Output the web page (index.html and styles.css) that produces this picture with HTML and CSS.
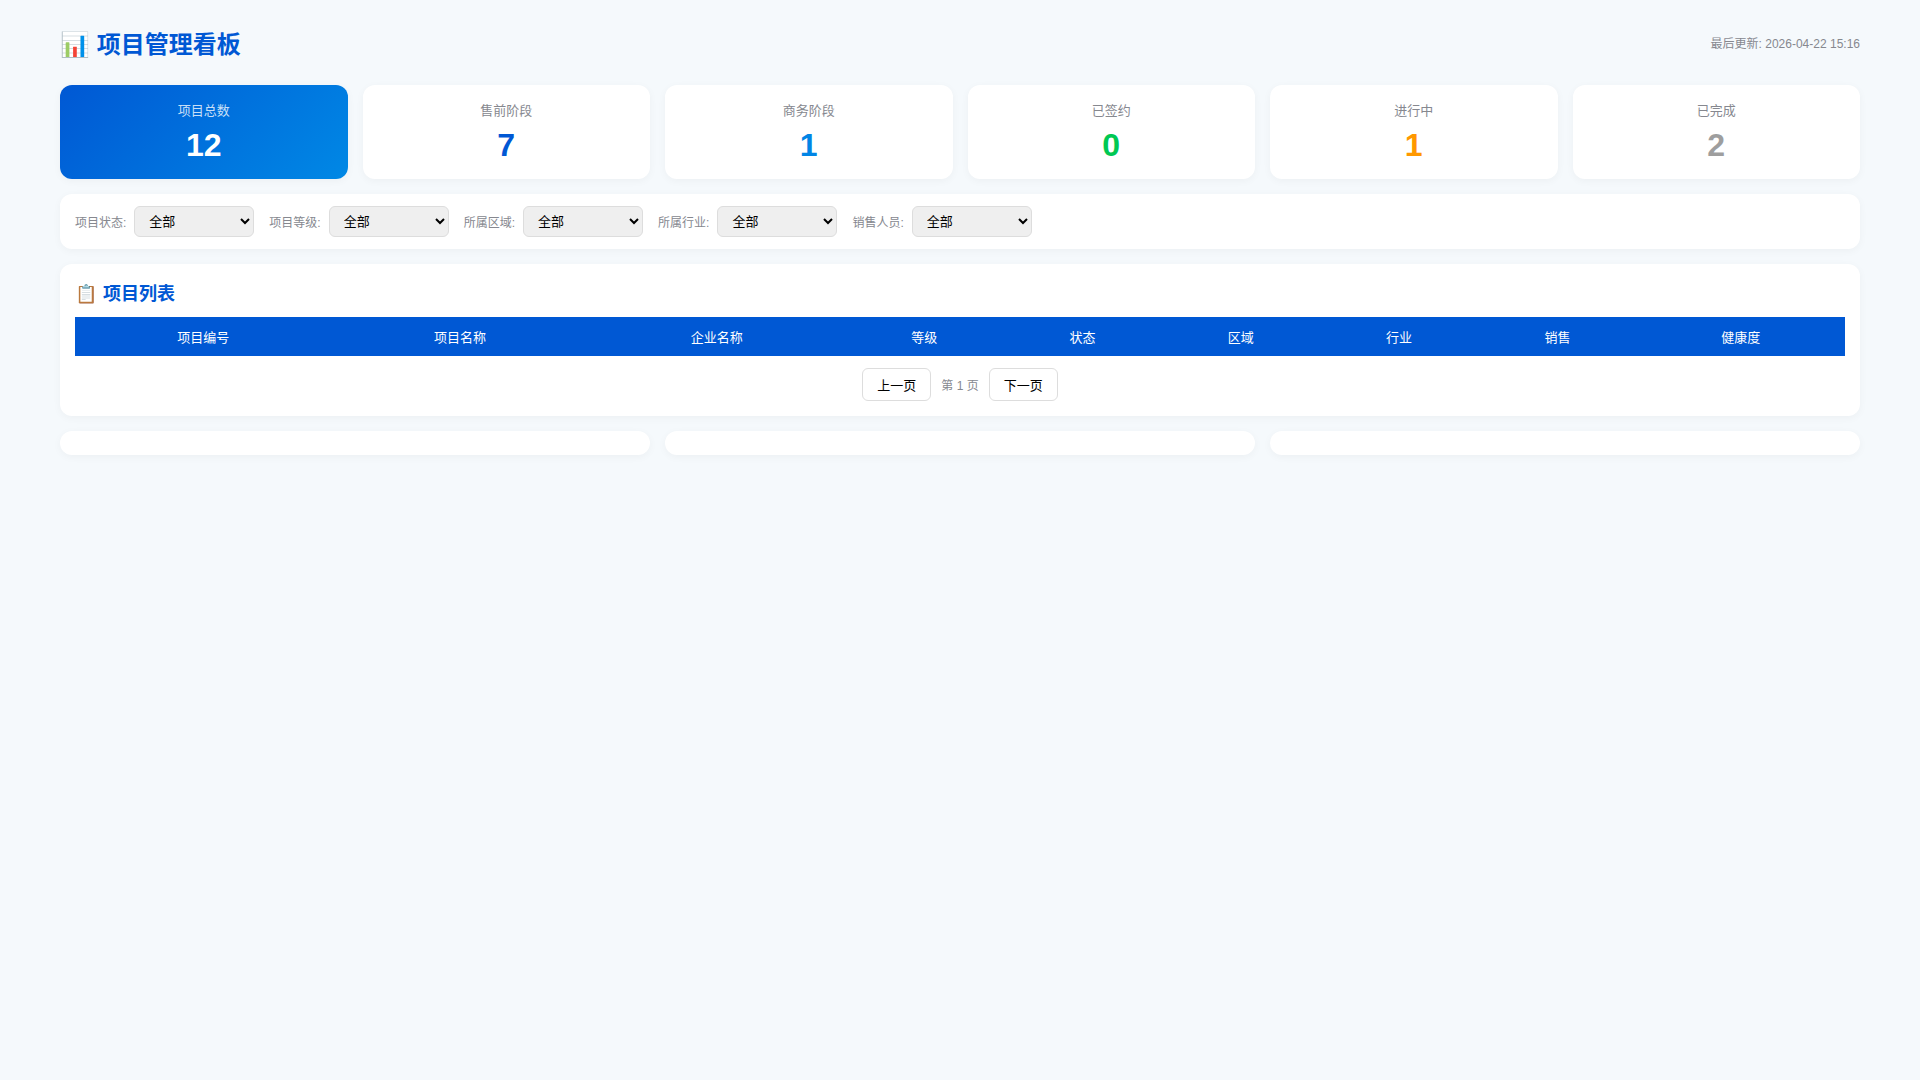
FILE: index.html
```html
<!DOCTYPE html>
<html lang="zh-CN">
<head>
<meta charset="utf-8">
<title>项目管理看板</title>
<link rel="stylesheet" href="styles.css">
</head>
<body>
<div class="header">
  <h1 class="page-title">📊 项目管理看板</h1>
  <div class="update-time">最后更新: 2026-04-22 15:16</div>
</div>
<div class="stats">
  <div class="stat stat-primary"><div class="stat-label">项目总数</div><div class="stat-value">12</div></div>
  <div class="stat"><div class="stat-label">售前阶段</div><div class="stat-value c-presale">7</div></div>
  <div class="stat"><div class="stat-label">商务阶段</div><div class="stat-value c-business">1</div></div>
  <div class="stat"><div class="stat-label">已签约</div><div class="stat-value c-signed">0</div></div>
  <div class="stat"><div class="stat-label">进行中</div><div class="stat-value c-progress">1</div></div>
  <div class="stat"><div class="stat-label">已完成</div><div class="stat-value c-done">2</div></div>
</div>
<div class="filters">
  <label class="filter"><span class="filter-label">项目状态:</span><select class="filter-select"><option>全部</option></select></label>
  <label class="filter"><span class="filter-label">项目等级:</span><select class="filter-select"><option>全部</option></select></label>
  <label class="filter"><span class="filter-label">所属区域:</span><select class="filter-select"><option>全部</option></select></label>
  <label class="filter"><span class="filter-label">所属行业:</span><select class="filter-select"><option>全部</option></select></label>
  <label class="filter"><span class="filter-label">销售人员:</span><select class="filter-select"><option>全部</option></select></label>
</div>
<section class="panel">
  <h2 class="panel-title"><span class="panel-emoji">📋</span> 项目列表</h2>
  <table class="table">
    <thead>
      <tr>
        <th class="col-wide">项目编号</th>
        <th class="col-wide">项目名称</th>
        <th class="col-wide">企业名称</th>
        <th class="col-narrow">等级</th>
        <th class="col-narrow">状态</th>
        <th class="col-narrow">区域</th>
        <th class="col-narrow">行业</th>
        <th class="col-narrow">销售</th>
        <th class="col-last">健康度</th>
      </tr>
    </thead>
  </table>
  <div class="pagination">
    <button class="page-btn" type="button">上一页</button>
    <span class="page-info">第 1 页</span>
    <button class="page-btn" type="button">下一页</button>
  </div>
</section>
<div class="charts">
  <div class="chart-card"></div>
  <div class="chart-card"></div>
  <div class="chart-card"></div>
</div>
</body>
</html>
```
FILE: styles.css
```css
* { box-sizing: border-box; }
html, body { margin: 0; padding: 0; }
body {
  min-height: 1080px;
  padding: 24px 60px;
  background: #f5f9fc;
  color: #333;
  font-family: "Liberation Sans", "Noto Sans CJK SC", sans-serif;
}
.header {
  display: flex;
  justify-content: space-between;
  align-items: center;
  height: 37px;
  margin-bottom: 24px;
}
.page-title {
  align-self: flex-start;
  margin: 0;
  padding-top: 2px;
  font-size: 24px;
  font-weight: 700;
  line-height: 37px;
  color: #0058d4;
}
.update-time { font-size: 12px; color: #86888f; }
.stats {
  display: grid;
  grid-template-columns: repeat(6, 1fr);
  gap: 15px;
  margin-bottom: 15px;
}
.stat {
  height: 94px;
  padding: 16px 15px 0;
  background: #fff;
  border-radius: 12px;
  box-shadow: 0 2px 8px rgba(0, 0, 0, 0.04);
  text-align: center;
}
.stat-primary { background: linear-gradient(135deg, #0058d4, #0088e5); }
.stat-primary .stat-label { color: rgba(255, 255, 255, 0.8); }
.stat-primary .stat-value { color: #fff; }
.stat-label { font-size: 13px; line-height: 19px; color: #86888f; margin-bottom: 7px; }
.stat-value { font-size: 32px; font-weight: 700; line-height: 37px; }
.c-presale { color: #0058d4; }
.c-business { color: #0085e5; }
.c-signed { color: #00c853; }
.c-progress { color: #ff9800; }
.c-done { color: #9e9e9e; }
.filters {
  display: flex;
  gap: 15px;
  height: 55px;
  align-items: center;
  padding: 0 15px;
  margin-bottom: 15px;
  background: #fff;
  border-radius: 12px;
  box-shadow: 0 2px 8px rgba(0, 0, 0, 0.04);
}
.filter { display: flex; align-items: center; gap: 8px; }
.filter-label { font-size: 12px; color: #86888f; }
.filter-select {
  width: 120px;
  height: 31px;
  padding: 0 10px;
  border: 1px solid #ddd;
  border-radius: 6px;
  font-family: inherit;
  font-size: 13px;
}
.panel {
  height: 152px;
  padding: 15px;
  margin-bottom: 15px;
  background: #fff;
  border-radius: 12px;
  box-shadow: 0 2px 8px rgba(0, 0, 0, 0.04);
}
.panel-title {
  margin: 0 0 8px;
  font-size: 18px;
  font-weight: 700;
  line-height: 30px;
  color: #0058d4;
}
.panel-emoji { margin-right: 1px; }
.table { width: 100%; border-collapse: collapse; table-layout: fixed; }
.table th {
  height: 39px;
  padding: 0;
  background: #0058d4;
  color: #fff;
  font-size: 13px;
  font-weight: 400;
}
.col-wide { width: 256.7px; }
.col-narrow { width: 158.3px; }
.col-last { width: 208.4px; }
.pagination {
  display: flex;
  justify-content: center;
  align-items: center;
  gap: 10px;
  margin-top: 12px;
}
.page-btn {
  padding: 6px 14px;
  background: #fff;
  border: 1px solid #ddd;
  border-radius: 6px;
  color: #000;
  font-family: inherit;
  font-size: 13px;
}
.page-info { font-size: 12px; color: #86888f; }
.charts { display: grid; grid-template-columns: repeat(3, 1fr); gap: 15px; }
.chart-card {
  height: 24px;
  background: #fff;
  border-radius: 12px;
  box-shadow: 0 2px 8px rgba(0, 0, 0, 0.04);
}
```
